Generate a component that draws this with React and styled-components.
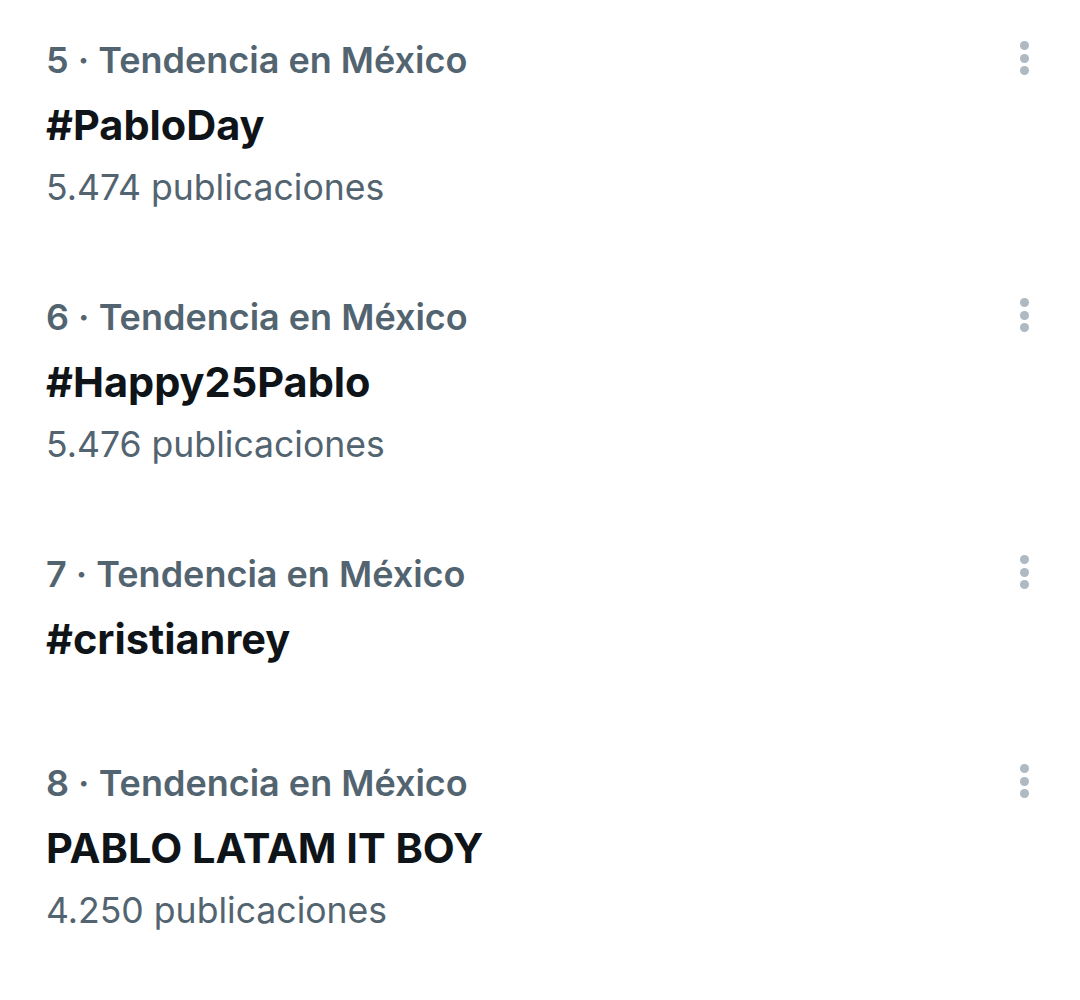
import { createGlobalStyle, styled } from "styled-components";

const GlobalStyle = createGlobalStyle`
    html, body {
        margin: 0;
        padding: 0;
        background: #ffffff;
    }
    body {
        font-family: Inter, "Noto Sans", "Liberation Sans", sans-serif;
        -webkit-font-smoothing: antialiased;
    }
`;

const trends = [
    { rank: 5, place: "México", name: "#PabloDay", posts: "5.474 publicaciones" },
    { rank: 6, place: "México", name: "#Happy25Pablo", posts: "5.476 publicaciones" },
    { rank: 7, place: "México", name: "#cristianrey" },
    { rank: 8, place: "México", name: "PABLO LATAM IT BOY", posts: "4.250 publicaciones" },
];

export default function App() {
    return (
        <>
            <GlobalStyle />
            <List>
                {trends.map((t) => (
                    <Trend key={t.rank}>
                        <Info>
                            <Meta>
                                {t.rank} · Tendencia en {t.place}
                            </Meta>
                            <Title>{t.name}</Title>
                            {t.posts && <Posts>{t.posts}</Posts>}
                        </Info>
                        <MoreButton aria-label="Más opciones">
                            <Dot />
                            <Dot />
                            <Dot />
                        </MoreButton>
                    </Trend>
                ))}
            </List>
        </>
    );
}

const List = styled.div`
    display: flex;
    flex-direction: column;
    width: 1080px;
`;

const Trend = styled.div`
    display: flex;
    justify-content: space-between;
    align-items: flex-start;
    box-sizing: border-box;
    min-height: 209px;
    padding: 36px 0 45px 46px;
`;

const Info = styled.div`
    display: flex;
    flex-direction: column;
`;

const Meta = styled.div`
    font-size: 36px;
    line-height: 48px;
    font-weight: 600;
    color: #536471;
`;

const Title = styled.div`
    margin-top: 13px;
    font-size: 41.5px;
    line-height: 56px;
    font-weight: 700;
    color: #0f1419;
`;

const Posts = styled.div`
    margin-top: 11px;
    font-size: 35.6px;
    line-height: 48px;
    font-weight: 400;
    color: #536471;
`;

const MoreButton = styled.div`
    display: flex;
    flex-direction: column;
    align-items: center;
    gap: 3.5px;
    width: 20px;
    margin: 5px 46px 0 0;
`;

const Dot = styled.span`
    width: 9px;
    height: 9px;
    border-radius: 50%;
    background: #aeb9c2;
`;
